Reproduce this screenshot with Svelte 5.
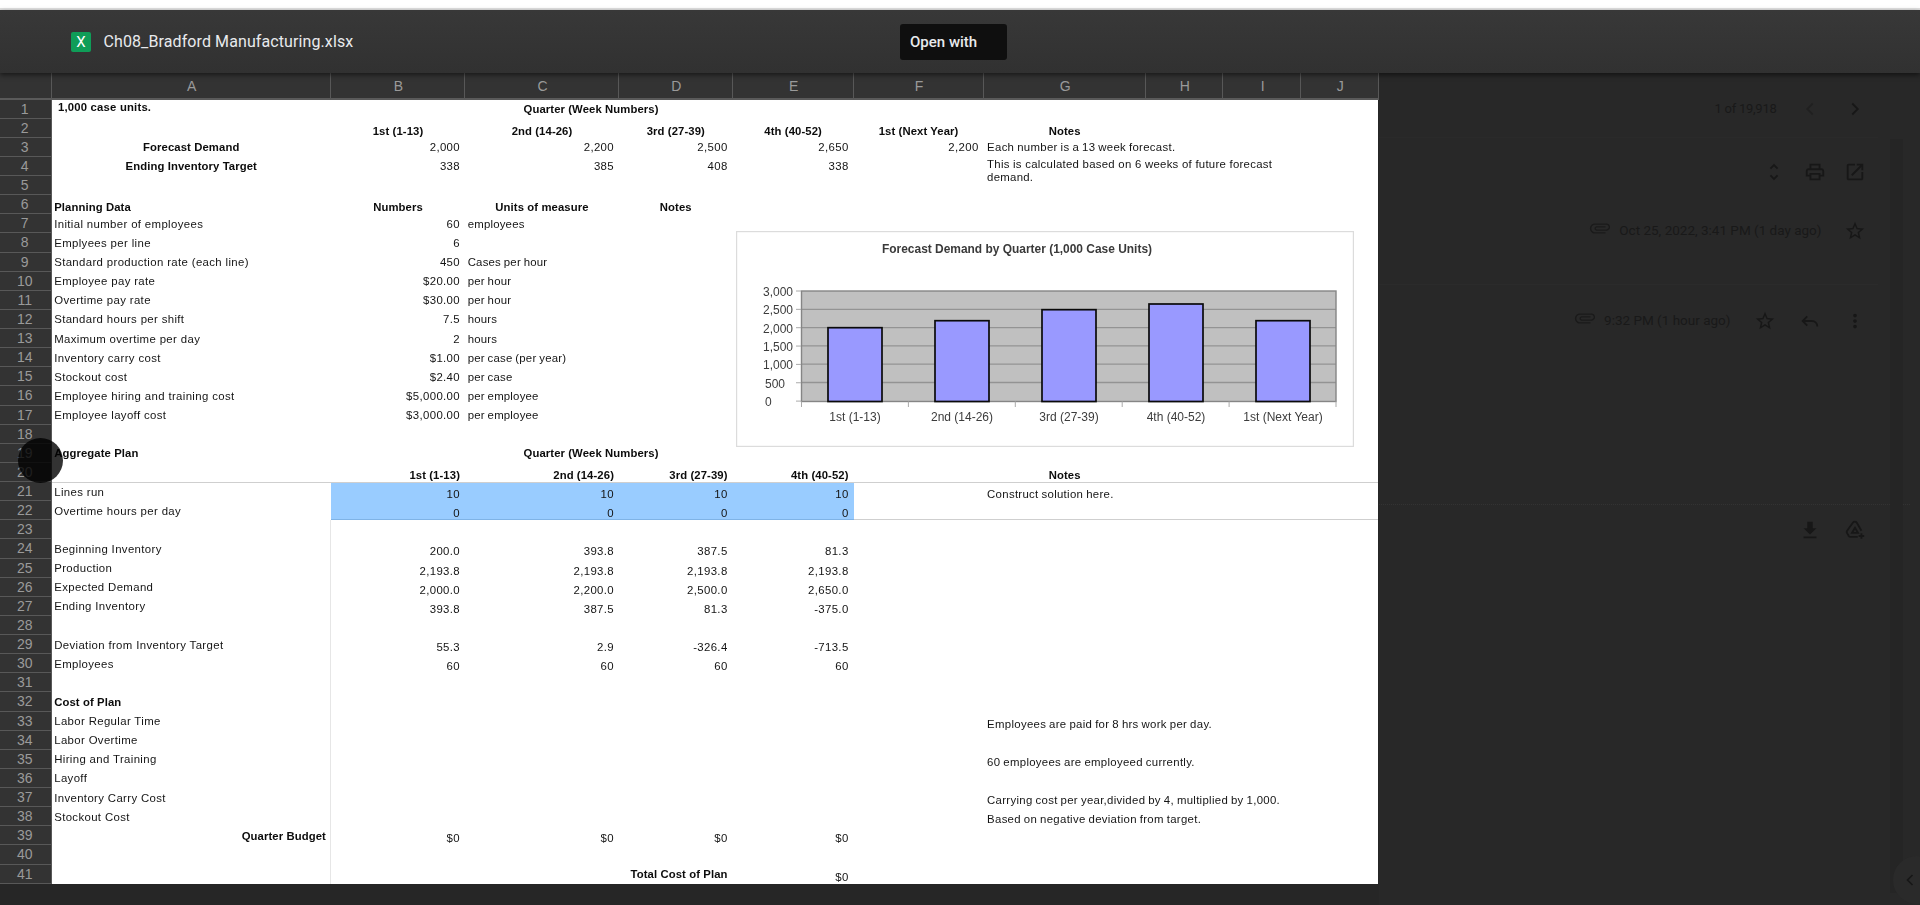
<script>
  const colLetters = ['A','B','C','D','E','F','G','H','I','J'];
  const rowNums = Array.from({ length: 41 }, (_, i) => i + 1);

  // Each row: row number, then [column 1-10, text, classes]
  const lab = (row, text, cls = '') => [row, 1, text, 'l ' + cls];
  const nums = (row, vals, cls = 'r') => vals.map((v, i) => [row, 2 + i, v, cls]);
  const unit = (row, text) => [row, 3, text, 'l u'];
  const note = (row, text, cls = 'low') => [row, 7, text, 'l n ' + cls];
  const spec = [
    ['Initial number of employees', '60', 'employees'],
    ['Emplyees per line', '6', ''],
    ['Standard production rate (each line)', '450', 'Cases per hour'],
    ['Employee pay rate', '$20.00', 'per hour'],
    ['Overtime pay rate', '$30.00', 'per hour'],
    ['Standard hours per shift', '7.5', 'hours'],
    ['Maximum overtime per day', '2', 'hours'],
    ['Inventory carry cost', '$1.00', 'per case (per year)'],
    ['Stockout cost', '$2.40', 'per case'],
    ['Employee hiring and training cost', '$5,000.00', 'per employee'],
    ['Employee layoff cost', '$3,000.00', 'per employee']
  ];
  const cells = [
    [1, 1, '1,000 case units.', 'l b first'],
    [1, 3, 'Quarter (Week Numbers)', 'l b q'],
    [2, 2, '1st (1-13)', 'c b low'], [2, 3, '2nd (14-26)', 'c b low'], [2, 4, '3rd (27-39)', 'c b low'],
    [2, 5, '4th (40-52)', 'c b low'], [2, 6, '1st (Next Year)', 'c b low'], [2, 7, 'Notes', 'c b low'],
    [3, 1, 'Forecast Demand', 'c b'],
    ...nums(3, ['2,000', '2,200', '2,500', '2,650', '2,200']),
    note(3, 'Each number is a 13 week forecast.', ''),
    [4, 1, 'Ending Inventory Target', 'c b'],
    ...nums(4, ['338', '385', '408', '338']),
    [6, 1, 'Planning Data', 'l b low'], [6, 2, 'Numbers', 'c b low'], [6, 3, 'Units of measure', 'c b low'], [6, 4, 'Notes', 'c b low'],
    ...spec.flatMap((s, i) => [lab(7 + i, s[0]), [7 + i, 2, s[1], 'r'], unit(7 + i, s[2])]),
    [19, 1, 'Aggregate Plan', 'l b'], [19, 3, 'Quarter (Week Numbers)', 'l b q'],
    ...nums(20, ['1st (1-13)', '2nd (14-26)', '3rd (27-39)', '4th (40-52)'], 'r b low'),
    [20, 7, 'Notes', 'c b low'],
    lab(21, 'Lines run'), ...nums(21, ['10', '10', '10', '10'], 'r low'), note(21, 'Construct solution here.'),
    lab(22, 'Overtime hours per day'), ...nums(22, ['0', '0', '0', '0'], 'r low'),
    lab(24, 'Beginning Inventory'), ...nums(24, ['200.0', '393.8', '387.5', '81.3'], 'r low'),
    lab(25, 'Production'), ...nums(25, ['2,193.8', '2,193.8', '2,193.8', '2,193.8'], 'r low'),
    lab(26, 'Expected Demand'), ...nums(26, ['2,000.0', '2,200.0', '2,500.0', '2,650.0'], 'r low'),
    lab(27, 'Ending Inventory'), ...nums(27, ['393.8', '387.5', '81.3', '-375.0'], 'r low'),
    lab(29, 'Deviation from Inventory Target'), ...nums(29, ['55.3', '2.9', '-326.4', '-713.5'], 'r low'),
    lab(30, 'Employees'), ...nums(30, ['60', '60', '60', '60'], 'r low'),
    [32, 1, 'Cost of Plan', 'l b'],
    lab(33, 'Labor Regular Time'), note(33, 'Employees are paid for 8 hrs work per day.'),
    lab(34, 'Labor Overtime'),
    lab(35, 'Hiring and Training'), note(35, '60 employees are employeed currently.'),
    lab(36, 'Layoff'),
    lab(37, 'Inventory Carry Cost'), note(37, 'Carrying cost per year,divided by 4, multiplied by 1,000.'),
    lab(38, 'Stockout Cost'), note(38, 'Based on negative deviation from target.'),
    [39, 1, 'Quarter Budget', 'r b'], ...nums(39, ['$0', '$0', '$0', '$0'], 'r low'),
    [41, 4, 'Total Cost of Plan', 'r b'], [41, 5, '$0', 'r low']
  ];

  const gridY = [309.3, 327.6, 345.9, 364.2, 382.5];
  const bars = [
    { x: 828, top: 327.7 }, { x: 935, top: 320.7 }, { x: 1042, top: 309.7 }, { x: 1149, top: 304 }, { x: 1256, top: 320.7 }
  ];
  const yLabels = ['3,000', '2,500', '2,000', '1,500', '1,000', '500', '0'];
  const xLabels = ['1st (1-13)', '2nd (14-26)', '3rd (27-39)', '4th (40-52)', '1st (Next Year)'];
</script>

<div class="page">
  <div class="strip"></div>
  <header class="toolbar">
    <div class="file">
      <span class="xl">X</span>
      <span class="name">Ch08_Bradford Manufacturing.xlsx</span>
    </div>
    <div class="open">Open with</div>
  </header>

  <main class="main">
    <section class="sheet">
      <div class="corner"></div>
      {#each colLetters as c}
        <div class="colh">{c}</div>
      {/each}
      {#each rowNums as n}
        <div class="rowh" style="grid-row:{n + 1}">{n}</div>
      {/each}
      <div class="paper"></div>
      <div class="blue"></div>
      <div class="inbox"></div>
      <div class="line20"></div>
      <div class="vline"></div>
      {#each cells as [r, c, t, cls]}
        <div class="cell {cls}" style="grid-row:{r + 1};grid-column:{c + 1}">{t}</div>
      {/each}
      <div class="wrapnote">This is calculated based on 6 weeks of future forecast<br />demand.</div>

      <svg class="chart" viewBox="736 231 618 216" width="618" height="216">
        <rect x="736.5" y="231.5" width="617" height="215" fill="#fff" stroke="#dcdcdc" stroke-width="1.4" />
        <text x="1017" y="253" text-anchor="middle" class="ctitle">Forecast Demand by Quarter (1,000 Case Units)</text>
        <rect x="801.5" y="291" width="534.5" height="110.5" fill="#c0c0c0" />
        {#each gridY as y}
          <line x1="801.5" x2="1336" y1={y} y2={y} stroke="#939393" stroke-width="1.3" />
        {/each}
        <rect x="801.5" y="291" width="534.5" height="110.5" fill="none" stroke="#858585" stroke-width="1.4" />
        {#each yLabels as l, i}
          <text x={i < 5 ? 763 : 765} y={296 + i * 18.35} class="clab">{l}</text>
          <line x1="796" x2="801" y1={291 + i * 18.35} y2={291 + i * 18.35} stroke="#aaa" />
        {/each}
        {#each [0, 1, 2, 3, 4, 5] as i}
          <line x1={801.5 + i * 106.9} x2={801.5 + i * 106.9} y1="401.5" y2="407" stroke="#aaa" />
        {/each}
        {#each bars as b}
          <rect x={b.x} y={b.top} width="54" height={401.5 - b.top} fill="#9999ff" stroke="#0a0a0a" stroke-width="1.7" />
        {/each}
        {#each xLabels as l, i}
          <text x={855 + i * 107} y="421" text-anchor="middle" class="clab">{l}</text>
        {/each}
      </svg>
      <div class="cursor"></div>
    </section>

    <aside class="side">
      <div class="srow r1">
        <span class="txt pager">1 of 19,918</span>
        <span class="ib dim"><svg viewBox="0 0 24 24"><path class="st" d="M15 6l-6 6 6 6" /></svg></span>
        <span class="ib"><svg viewBox="0 0 24 24"><path class="st" d="M9 6l6 6-6 6" /></svg></span>
      </div>
      <div class="srow r2">
        <span class="ib tight"><svg viewBox="0 0 24 24"><path d="M12 5.83L15.17 9l1.41-1.41L12 3 7.41 7.59 8.83 9 12 5.83zm0 12.34L8.83 15l-1.41 1.41L12 21l4.59-4.59L15.17 15 12 18.17z" /></svg></span>
        <span class="ib tight"><svg viewBox="0 0 24 24"><path d="M19 8h-1V3H6v5H5c-1.66 0-3 1.34-3 3v6h4v4h12v-4h4v-6c0-1.66-1.34-3-3-3zM8 5h8v3H8V5zm8 12v2H8v-4h8v2zm2-2v-2H6v2H4v-4c0-.55.45-1 1-1h14c.55 0 1 .45 1 1v4h-2z" /></svg></span>
        <span class="ib tight last"><svg viewBox="0 0 24 24"><path d="M19 19H5V5h7V3H5c-1.11 0-2 .9-2 2v14c0 1.1.89 2 2 2h14c1.1 0 2-.9 2-2v-7h-2v7zM14 3v2h3.59l-9.83 9.83 1.41 1.41L19 6.41V10h2V3h-7z" /></svg></span>
      </div>
      <div class="srow r3">
        <svg class="clip" viewBox="0 0 24 24"><path d="M16.5 6v11.5c0 2.21-1.79 4-4 4s-4-1.79-4-4V5c0-1.38 1.12-2.5 2.5-2.5s2.5 1.12 2.5 2.5v10.5c0 .55-.45 1-1 1s-1-.45-1-1V6H10v9.5c0 1.38 1.12 2.5 2.5 2.5s2.5-1.12 2.5-2.5V5c0-2.21-1.79-4-4-4S7 2.79 7 5v12.5c0 3.04 2.46 5.5 5.5 5.5s5.5-2.46 5.5-5.5V6h-1.5z" /></svg>
        <span class="txt date">Oct 25, 2022, 3:41 PM (1 day ago)</span>
        <span class="ib star"><svg viewBox="0 0 24 24"><path d="M22 9.24l-7.19-.62L12 2 9.19 8.63 2 9.24l5.46 4.73L5.82 21 12 17.27 18.18 21l-1.63-7.03L22 9.24zM12 15.4l-3.76 2.27 1-4.28-3.32-2.88 4.38-.38L12 6.1l1.71 4.04 4.38.38-3.32 2.88 1 4.28L12 15.4z" /></svg></span>
      </div>
      <div class="srow r4"></div>
      <div class="srow r5">
        <svg class="clip" viewBox="0 0 24 24"><path d="M16.5 6v11.5c0 2.21-1.79 4-4 4s-4-1.79-4-4V5c0-1.38 1.12-2.5 2.5-2.5s2.5 1.12 2.5 2.5v10.5c0 .55-.45 1-1 1s-1-.45-1-1V6H10v9.5c0 1.38 1.12 2.5 2.5 2.5s2.5-1.12 2.5-2.5V5c0-2.21-1.79-4-4-4S7 2.79 7 5v12.5c0 3.04 2.46 5.5 5.5 5.5s5.5-2.46 5.5-5.5V6h-1.5z" /></svg>
        <span class="txt date">9:32 PM (1 hour ago)</span>
        <span class="ib star2"><svg viewBox="0 0 24 24"><path d="M22 9.24l-7.19-.62L12 2 9.19 8.63 2 9.24l5.46 4.73L5.82 21 12 17.27 18.18 21l-1.63-7.03L22 9.24zM12 15.4l-3.76 2.27 1-4.28-3.32-2.88 4.38-.38L12 6.1l1.71 4.04 4.38.38-3.32 2.88 1 4.28L12 15.4z" /></svg></span>
        <span class="ib"><svg viewBox="0 0 24 24"><path class="st" d="M9 7l-5 5 5 5M4 12h10c3.5 0 6 2.5 6 6" /></svg></span>
        <span class="ib"><svg viewBox="0 0 24 24"><path d="M12 8c1.1 0 2-.9 2-2s-.9-2-2-2-2 .9-2 2 .9 2 2 2zm0 2c-1.1 0-2 .9-2 2s.9 2 2 2 2-.9 2-2-.9-2-2-2zm0 6c-1.1 0-2 .9-2 2s.9 2 2 2 2-.9 2-2-.9-2-2-2z" /></svg></span>
      </div>
      <div class="srow r6"></div>
      <div class="srow r7">
        <span class="ib"><svg viewBox="0 0 24 24"><path d="M5 21h14v-2H5v2zM19 10h-4V3H9v7H5l7 7 7-7z" /></svg></span>
        <span class="ib"><svg viewBox="0 0 24 24"><path class="st" d="M15 19.5H7c-.8 0-1.4-.4-1.8-1l-2-3.4c-.4-.7-.4-1.4 0-2.1L9.8 3.9c.9-1.5 3.1-1.5 4 0l5.2 8.9M12 9.5l-3.3 5.7h6.6zM19 15.5v6M16 18.5h6" /></svg></span>
      </div>
      <div class="scroll"></div>
      <div class="fab"><svg viewBox="0 0 24 24"><path class="st" d="M15 6l-6 6 6 6" /></svg></div>
    </aside>
  </main>
</div>

<style>
  :global(body) {
    margin: 0;
    background: #262626;
    overflow: hidden;
  }
  .page {
    width: 1920px;
    height: 905px;
    position: relative;
    overflow: hidden;
    font-family: 'Liberation Sans', Arial, sans-serif;
    background: #262626;
  }
  .strip {
    height: 10px;
    box-sizing: border-box;
    background: #fff;
    border-bottom: 2px solid #e2e2e2;
  }
  .toolbar {
    height: 63px;
    box-sizing: border-box;
    display: flex;
    align-items: center;
    background: linear-gradient(#383838, #313131);
    box-shadow: 0 2px 5px rgba(0, 0, 0, 0.55);
    position: relative;
    z-index: 3;
    padding-left: 71px;
  }
  .file {
    width: 829px;
    display: flex;
    align-items: center;
    gap: 12.5px;
  }
  .xl {
    width: 20px;
    height: 20px;
    border-radius: 2px;
    background: #0f9d58;
    color: #fff;
    font: 400 15px Roboto, sans-serif;
    display: flex;
    align-items: center;
    justify-content: center;
  }
  .name {
    color: #e8eaed;
    font: 400 16px Roboto, sans-serif;
    letter-spacing: 0.1px;
    white-space: nowrap;
  }
  .open {
    width: 107px;
    height: 36px;
    margin-top: 1px;
    box-sizing: border-box;
    padding-left: 10px;
    display: flex;
    align-items: center;
    background: #0f0f0f;
    border-radius: 3px;
    color: #e8eaed;
    font: 500 15px Roboto, sans-serif;
  }
  .main {
    display: flex;
    height: 832px;
  }
  .sheet {
    width: 1379px;
    flex: none;
    display: grid;
    grid-template-columns: 51.5px 279.5px 134px 154px 113.6px 121px 130px 162px 77.5px 78px 77.5px;
    grid-template-rows: 26.5px repeat(41, 19.13px);
    align-content: start;
    position: relative;
  }
  .corner,
  .colh {
    background: #333;
    border-bottom: 2px solid #5a5a5a;
    border-right: 1px solid #585858;
    box-sizing: border-box;
  }
  .colh {
    display: flex;
    align-items: center;
    justify-content: center;
    color: #9a9a9a;
    font-size: 14px;
    padding: 1px 0 0 2px;
  }
  .rowh {
    grid-column: 1;
    background: #333;
    border-bottom: 1px solid #585858;
    border-right: 1px solid #585858;
    box-sizing: border-box;
    color: #9a9a9a;
    font-size: 14px;
    display: flex;
    align-items: center;
    justify-content: center;
    padding-right: 1px;
    overflow: hidden;
  }
  .paper {
    grid-row: 2 / 43;
    grid-column: 2 / -1;
    background: #fff;
    margin-right: 1px;
  }
  .blue {
    grid-row: 22 / 24;
    grid-column: 3 / 7;
    background: #99ccff;
    border-bottom: 1px solid #7fb3e6;
    z-index: 1;
  }
  .inbox {
    grid-row: 22 / 24;
    grid-column: 7 / -1;
    border-bottom: 1px solid #cfcfcf;
    margin-right: 1px;
    z-index: 1;
  }
  .line20 {
    grid-row: 22;
    grid-column: 2 / -1;
    border-top: 1px solid #cfcfcf;
    margin-right: 1px;
    z-index: 1;
  }
  .vline {
    grid-row: 24 / 43;
    grid-column: 2;
    border-right: 1px solid #e6e6e6;
    z-index: 1;
  }
  .cell {
    z-index: 2;
    min-width: 0;
    box-sizing: border-box;
    display: flex;
    align-items: center;
    white-space: nowrap;
    font-size: 11.4px;
    letter-spacing: 0.36px;
    color: #141414;
    filter: blur(0.25px);
  }
  .l {
    justify-content: flex-start;
    padding-left: 2.7px;
  }
  .n {
    padding-left: 3.5px;
    letter-spacing: 0.3px;
    word-spacing: -0.5px;
  }
  .u {
    letter-spacing: 0.2px;
    word-spacing: -0.5px;
  }
  .r {
    justify-content: flex-end;
    padding-right: 5px;
  }
  .c {
    justify-content: center;
  }
  .b {
    font-weight: 700;
    font-size: 11.3px;
    color: #0c0c0c;
    letter-spacing: 0.1px;
    word-spacing: 0;
  }
  .low {
    padding-top: 5px;
  }
  .first {
    padding-left: 6.5px;
    padding-bottom: 4px;
    letter-spacing: 0.2px;
  }
  .q {
    padding-left: 58.5px;
  }
  .wrapnote {
    grid-row: 5 / 7;
    grid-column: 8 / -1;
    z-index: 2;
    padding: 1px 0 0 3.5px;
    font-size: 11.4px;
    letter-spacing: 0.26px;
    line-height: 12.7px;
    color: #141414;
    white-space: nowrap;
    filter: blur(0.25px);
  }
  .chart {
    position: absolute;
    left: 736px;
    top: 158px;
    z-index: 3;
    display: block;
    filter: blur(0.35px);
  }
  .ctitle {
    font: 700 11.95px 'Liberation Sans', Arial, sans-serif;
    fill: #3a3a3a;
  }
  .clab {
    font: 12px 'Liberation Sans', Arial, sans-serif;
    fill: #3c3c3c;
  }
  .cursor {
    position: absolute;
    left: 18px;
    top: 365px;
    width: 45px;
    height: 45px;
    border-radius: 50%;
    background: rgba(0, 0, 0, 0.8);
    z-index: 4;
  }
  .side {
    flex: 1;
    position: relative;
    background: #282828;
    padding-right: 42.5px;
    box-sizing: border-box;
  }
  .srow {
    display: flex;
    align-items: center;
    justify-content: flex-end;
    box-sizing: border-box;
  }
  .r1 {
    height: 65px;
    padding-top: 7px;
    gap: 0;
    border-bottom: 1px solid #2a2a2a;
  }
  .r2 {
    height: 68px;
  }
  .r3 {
    height: 50px;
  }
  .r4 {
    height: 29px;
    border-bottom: 1px solid #2b2b2b;
  }
  .r5 {
    height: 72px;
  }
  .r6 {
    height: 148px;
    border-bottom: 1px dotted #333;
    margin-right: -32px;
  }
  .r7 {
    height: 50px;
  }
  .ib {
    width: 45px;
    height: 24px;
    display: flex;
    align-items: center;
    justify-content: center;
    flex: none;
  }
  .tight {
    width: 40.5px;
  }
  .last {
    margin-right: 2.25px;
  }
  .ib svg {
    width: 22px;
    height: 22px;
    fill: #171717;
  }
  .fab svg {
    width: 20px;
    height: 20px;
    fill: none;
  }
  .dim {
    opacity: 0.45;
  }
  .st {
    fill: none;
    stroke: #171717;
    stroke-width: 2;
  }
  .txt {
    font: 13.5px Roboto, sans-serif;
    color: #191919;
    white-space: nowrap;
  }
  .pager {
    font-size: 13px;
    letter-spacing: -0.25px;
    margin-right: 11px;
  }
  .date {
    margin-bottom: 3px;
  }
  .clip {
    width: 22px;
    height: 22px;
    fill: #1a1a1a;
    transform: rotate(90deg);
    margin-right: 8px;
    margin-bottom: 6px;
    flex: none;
  }
  .star {
    margin-left: 11px;
  }
  .star2 {
    margin-left: 12px;
  }
  .scroll {
    position: absolute;
    left: 511px;
    top: 66px;
    width: 13px;
    height: 754px;
    background: #252525;
  }
  .fab {
    position: absolute;
    left: 514px;
    top: 783px;
    width: 48px;
    height: 48px;
    border-radius: 50%;
    background: #2a2a2a;
    display: flex;
    align-items: center;
    padding-left: 7px;
    box-sizing: border-box;
  }
</style>
